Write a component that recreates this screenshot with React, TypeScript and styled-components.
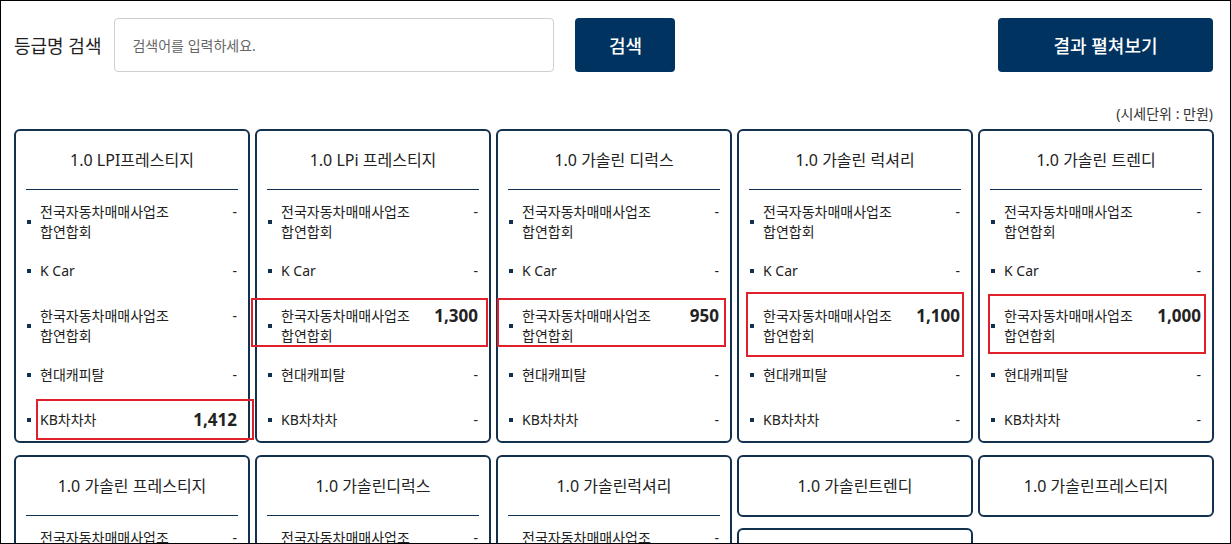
import React from "react";
import styled, { createGlobalStyle } from "styled-components";

const Global = createGlobalStyle`
  html, body { margin: 0; padding: 0; background: #fff; }
  body { font-family: "Noto Sans", "Noto Sans CJK KR", sans-serif; color: #222; }
  * { box-sizing: border-box; }
`;

const Frame = styled.div`
  width: 1231px;
  height: 544px;
  border: 1px solid #000;
  overflow: hidden;
  padding: 17px 16px 0 13px;
`;

const Toolbar = styled.div`
  display: flex;
  align-items: center;
  height: 54px;
  margin-right: 1px;
`;

const Label = styled.span`
  font-size: 18px;
  color: #222;
  margin-right: 13px;
`;

const SearchInput = styled.input`
  width: 440px;
  height: 54px;
  border: 1px solid #cfcfcf;
  border-radius: 4px;
  padding: 0 17px;
  font-family: "Noto Sans", "Noto Sans CJK KR", sans-serif;
  font-size: 14px;
  color: #333;
  outline: none;
  &::placeholder { color: #666; }
`;

const NavyButton = styled.button<{ $w: number }>`
  width: ${(p) => p.$w}px;
  height: 54px;
  background: #00335f;
  color: #fff;
  border: none;
  border-radius: 4px;
  font-family: "Noto Sans", "Noto Sans CJK KR", sans-serif;
  font-size: 18px;
  font-weight: 500;
  cursor: pointer;
`;

const SearchBtn = styled(NavyButton)`
  margin-left: 21px;
`;

const ExpandBtn = styled(NavyButton)`
  margin-left: auto;
`;

const Unit = styled.div`
  text-align: right;
  font-size: 14px;
  line-height: 18px;
  color: #333;
  margin: 33px 1px 6px 0;
`;

const Grid = styled.div`
  width: 1205px;
  margin-right: -5px;
  &::after { content: ""; display: block; clear: both; }
`;

const Card = styled.div`
  position: relative;
  float: left;
  width: 236px;
  margin: 0 5px 12px 0;
  border: 2px solid #12314f;
  border-radius: 6px;
  padding: 0 10px 5px;
`;

const ShortCard = styled(Card)`
  margin-bottom: 11px;
  padding-bottom: 0;
`;

const Title = styled.div<{ $divided: boolean }>`
  text-align: center;
  font-size: 16px;
  line-height: 22px;
  color: #222;
  padding: 18px 0;
  border-bottom: ${(p) => (p.$divided ? "1px solid #12314f" : "none")};
`;

const List = styled.ul`
  list-style: none;
  margin: 0;
  padding: 12px 1px 0;
  display: flex;
  flex-direction: column;
  gap: 19px;
`;

const Item = styled.li`
  display: flex;
  align-items: flex-start;
  justify-content: space-between;
  min-height: 26px;
`;

const NameWrap = styled.div`
  display: flex;
  align-items: center;
  gap: 9px;
`;

const Bullet = styled.span`
  width: 4px;
  height: 4px;
  background: #12314f;
  flex: 0 0 auto;
`;

const Name = styled.span`
  max-width: 136px;
  font-size: 14px;
  line-height: 20px;
  color: #222;
`;

const Value = styled.span<{ $strong: boolean }>`
  font-size: ${(p) => (p.$strong ? "17px" : "14px")};
  font-weight: ${(p) => (p.$strong ? 700 : 400)};
  line-height: 20px;
  color: #222;
  white-space: nowrap;
`;

const Highlight = styled.div<{ $l: number; $t: number; $w: number; $h: number }>`
  position: absolute;
  left: ${(p) => p.$l}px;
  top: ${(p) => p.$t}px;
  width: ${(p) => p.$w}px;
  height: ${(p) => p.$h}px;
  border: 2px solid #e0202a;
  pointer-events: none;
`;

const sources = [
  "전국자동차매매사업조합연합회",
  "K Car",
  "한국자동차매매사업조합연합회",
  "현대캐피탈",
  "KB차차차",
];

type Box = { l: number; t: number; w: number; h: number };
type CardData = { title: string; values?: string[]; box?: Box };

const cards: CardData[] = [
  { title: "1.0 LPI프레스티지", values: ["-", "-", "-", "-", "1,412"], box: { l: 20, t: 268, w: 218, h: 41 } },
  { title: "1.0 LPi 프레스티지", values: ["-", "-", "1,300", "-", "-"], box: { l: -6, t: 167, w: 237, h: 49 } },
  { title: "1.0 가솔린 디럭스", values: ["-", "-", "950", "-", "-"], box: { l: -1, t: 167, w: 229, h: 49 } },
  { title: "1.0 가솔린 럭셔리", values: ["-", "-", "1,100", "-", "-"], box: { l: 7, t: 161, w: 218, h: 65 } },
  { title: "1.0 가솔린 트렌디", values: ["-", "-", "1,000", "-", "-"], box: { l: 8, t: 163, w: 218, h: 60 } },
  { title: "1.0 가솔린 프레스티지", values: ["-", "-", "-", "-", "-"] },
  { title: "1.0 가솔린디럭스", values: ["-", "-", "-", "-", "-"] },
  { title: "1.0 가솔린럭셔리", values: ["-", "-", "-", "-", "-"] },
  { title: "1.0 가솔린트렌디" },
  { title: "1.0 가솔린프레스티지" },
  { title: "1.0 가솔린 스마트", values: ["-", "-", "-", "-", "-"] },
];

function PriceCard({ data }: { data: CardData }) {
  if (!data.values) {
    return (
      <ShortCard>
        <Title $divided={false}>{data.title}</Title>
      </ShortCard>
    );
  }
  return (
    <Card>
      <Title $divided>{data.title}</Title>
      <List>
        {sources.map((s, i) => {
          const v = data.values![i];
          return (
            <Item key={s + i}>
              <NameWrap>
                <Bullet />
                <Name>{s}</Name>
              </NameWrap>
              <Value $strong={v !== "-"}>{v}</Value>
            </Item>
          );
        })}
      </List>
      {data.box && <Highlight $l={data.box.l} $t={data.box.t} $w={data.box.w} $h={data.box.h} />}
    </Card>
  );
}

export default function App() {
  return (
    <>
      <Global />
      <Frame>
        <Toolbar>
          <Label>등급명 검색</Label>
          <SearchInput placeholder="검색어를 입력하세요." />
          <SearchBtn $w={100}>검색</SearchBtn>
          <ExpandBtn $w={215}>결과 펼쳐보기</ExpandBtn>
        </Toolbar>
        <Unit>(시세단위 : 만원)</Unit>
        <Grid>
          {cards.map((c, i) => (
            <PriceCard key={i} data={c} />
          ))}
        </Grid>
      </Frame>
    </>
  );
}
